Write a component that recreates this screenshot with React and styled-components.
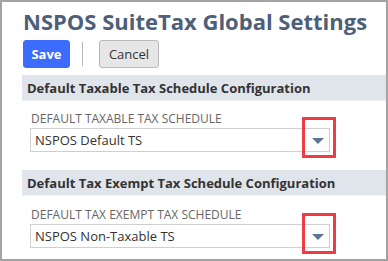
import React from "react";
import styled, { createGlobalStyle } from "styled-components";

const Global = createGlobalStyle`
  html, body { margin: 0; padding: 0; background: #fff; }
  body { font-family: "Open Sans", "Liberation Sans", sans-serif; }
  * { box-sizing: border-box; }
`;

const Frame = styled.div`
  width: 388px;
  height: 261px;
  border: 2px solid #a3a3a3;
  padding: 4px 0 0 20px;
  overflow: hidden;
`;

const Title = styled.h1`
  margin: 0;
  font-size: 22px;
  line-height: 30px;
  font-weight: 700;
  color: #4d5f79;
  padding-left: 1px;
`;

const Toolbar = styled.div`
  display: flex;
  align-items: center;
  gap: 12px;
  margin-top: 4px;
  padding-left: 1px;
`;

const Button = styled.button`
  height: 28px;
  width: ${(p) => (p.$primary ? "47px" : "60px")};
  padding: 0;
  border-radius: 3px;
  font-family: inherit;
  font-size: 13px;
  font-weight: ${(p) => (p.$primary ? 700 : 400)};
  color: ${(p) => (p.$primary ? "#fff" : "#333")};
  background: ${(p) => (p.$primary ? "#3b6cfd" : "#e6e6e6")};
  border: 1px solid ${(p) => (p.$primary ? "#3b6cfd" : "#b9b9b9")};
  cursor: pointer;
`;

const Divider = styled.span`
  width: 1px;
  height: 24px;
  background: #b8b8b8;
  margin-right: 4px;
`;

const SectionHeader = styled.div`
  margin-top: ${(p) => p.$top}px;
  height: 26px;
  display: flex;
  align-items: center;
  padding-left: 5px;
  background: #e0e4eb;
  border-bottom: 1px solid #eef0f4;
  font-size: 13px;
  font-weight: 700;
  color: #333;
`;

const Field = styled.div`
  padding-left: 8px;
  margin-top: ${(p) => p.$top}px;
`;

const Label = styled.div`
  font-size: 12px;
  line-height: 14px;
  color: #666;
  padding-left: 1px;
  text-transform: uppercase;
`;

const Select = styled.div`
  position: relative;
  margin-top: 2px;
  width: 300px;
  height: 24px;
  border: 1px solid #cfcfcf;
  display: flex;
  align-items: center;
  padding-left: 4px;
  font-size: 13px;
  color: #333;
`;

const Arrow = styled.span`
  position: absolute;
  right: 5px;
  top: 9px;
  width: 0;
  height: 0;
  border-left: 6px solid transparent;
  border-right: 6px solid transparent;
  border-top: 6px solid #5e7597;
`;

const Highlight = styled.span`
  position: absolute;
  left: 271px;
  top: -12px;
  width: 34px;
  height: 41px;
  border: 3px solid #ef3b44;
`;

function Dropdown({ value }) {
  return (
    <Select>
      {value}
      <Arrow />
      <Highlight />
    </Select>
  );
}

export default function App() {
  return (
    <>
      <Global />
      <Frame>
        <Title>NSPOS SuiteTax Global Settings</Title>
        <Toolbar>
          <Button $primary>Save</Button>
          <Divider />
          <Button>Cancel</Button>
        </Toolbar>
        <SectionHeader $top={7}>Default Taxable Tax Schedule Configuration</SectionHeader>
        <Field $top={11}>
          <Label>Default Taxable Tax Schedule</Label>
          <Dropdown value="NSPOS Default TS" />
        </Field>
        <SectionHeader $top={18}>Default Tax Exempt Tax Schedule Configuration</SectionHeader>
        <Field $top={12}>
          <Label>Default Tax Exempt Tax Schedule</Label>
          <Dropdown value="NSPOS Non-Taxable TS" />
        </Field>
      </Frame>
    </>
  );
}
